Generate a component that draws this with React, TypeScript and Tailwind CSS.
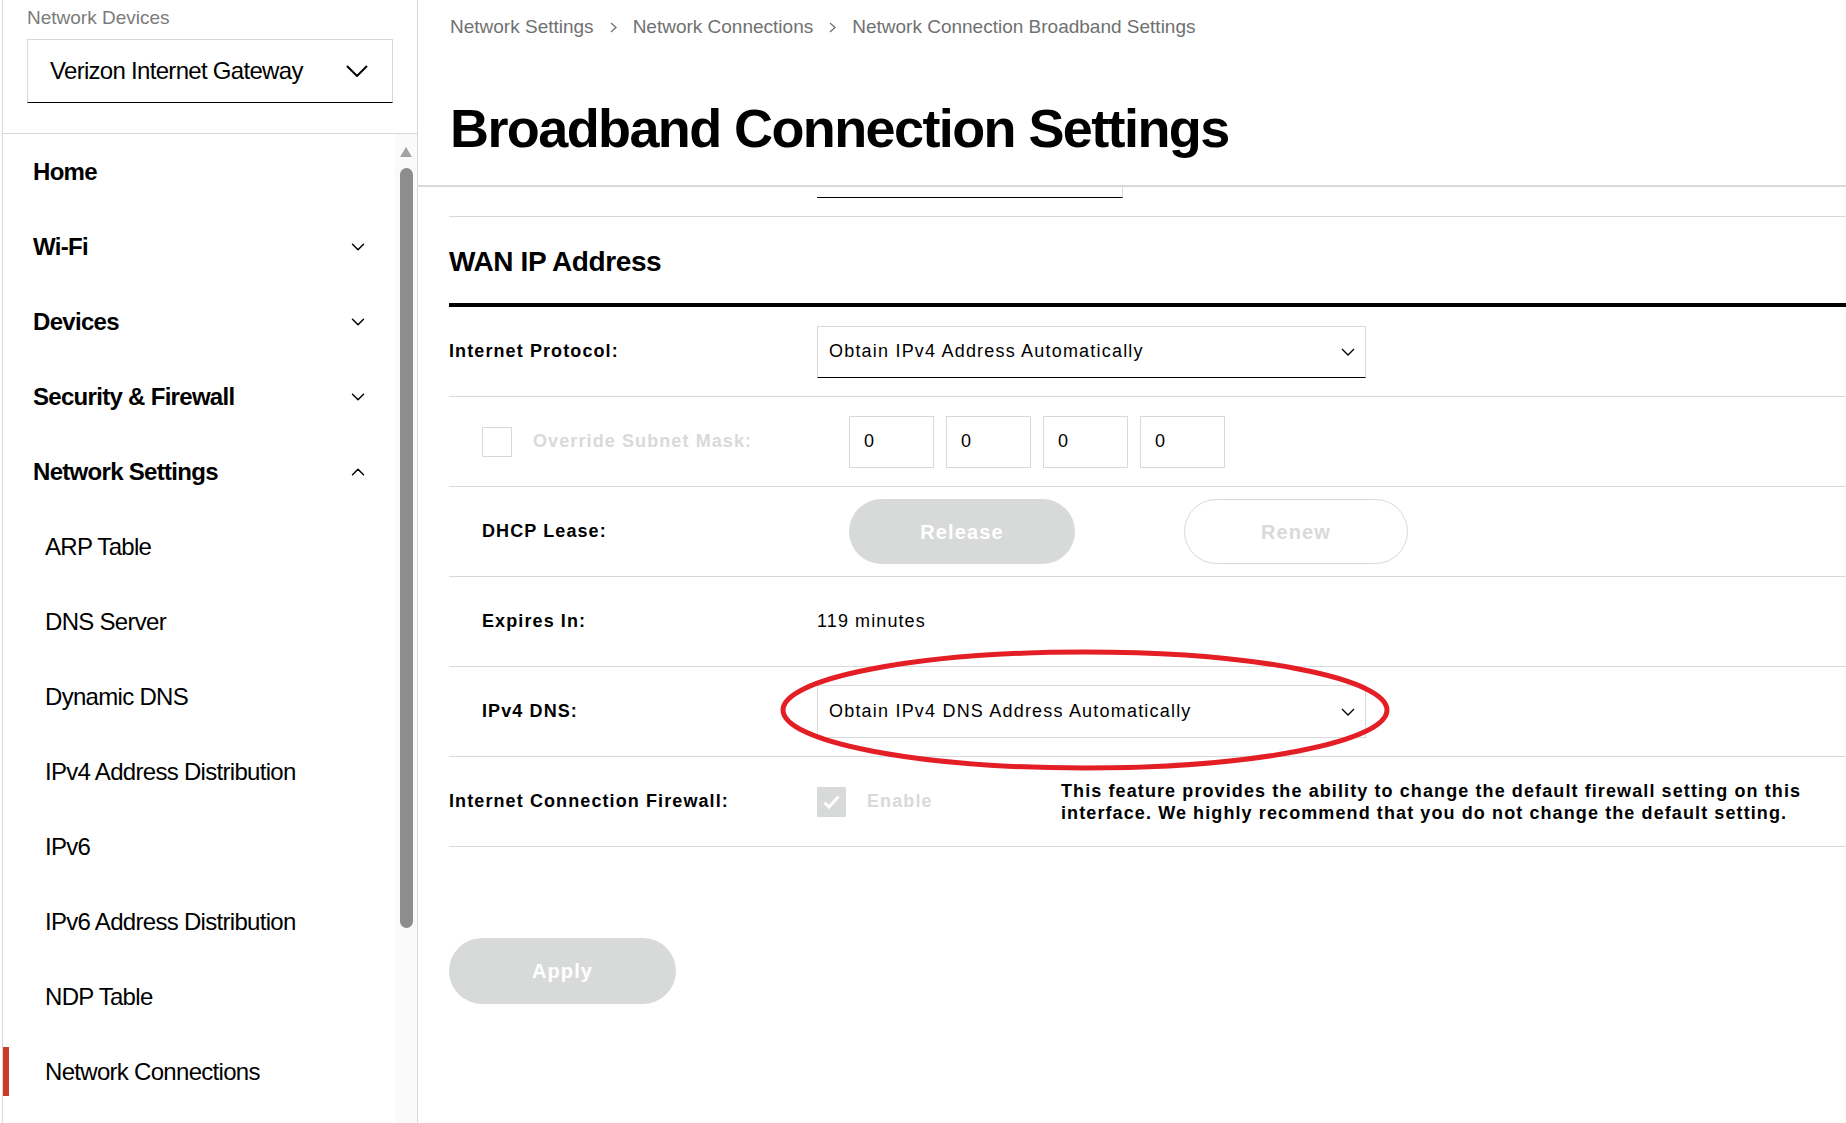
import { ChevronDown, ChevronUp } from 'lucide-react'

type NavItem = { label: string; bold?: boolean; chevron?: 'down' | 'up'; active?: boolean }

const NAV: NavItem[] = [
  { label: 'Home', bold: true },
  { label: 'Wi-Fi', bold: true, chevron: 'down' },
  { label: 'Devices', bold: true, chevron: 'down' },
  { label: 'Security & Firewall', bold: true, chevron: 'down' },
  { label: 'Network Settings', bold: true, chevron: 'up' },
  { label: 'ARP Table' },
  { label: 'DNS Server' },
  { label: 'Dynamic DNS' },
  { label: 'IPv4 Address Distribution' },
  { label: 'IPv6' },
  { label: 'IPv6 Address Distribution' },
  { label: 'NDP Table' },
  { label: 'Network Connections', active: true },
]

const CRUMBS = ['Network Settings', 'Network Connections', 'Network Connection Broadband Settings']

function SelectChevron() {
  return (
    <svg width="14" height="8" viewBox="0 0 14 8" fill="none">
      <path d="M1 1l6 6 6-6" stroke="#000" strokeWidth="1.3" />
    </svg>
  )
}

function Sidebar() {
  return (
    <aside className="ml-[2px] w-[416px] h-full flex-shrink-0 border-l border-r border-[#d8dada] flex flex-col">
      {/* Device picker */}
      <div className="h-[134px] border-b border-[#d8dada] pl-[24px] pt-[6px]">
        <div className="text-[19px] leading-[24px] text-[#7a7c7c]">Network Devices</div>
        <div className="mt-[9px] w-[366px] h-[64px] border border-[#d8dada] border-b-black flex items-center justify-between pl-[22px] pr-[24px]">
          <span className="text-[24px] tracking-[-0.7px] text-black">Verizon Internet Gateway</span>
          <svg width="22" height="12" viewBox="0 0 22 12" fill="none">
            <path d="M1 1l10 10 10-10" stroke="#000" strokeWidth="2" />
          </svg>
        </div>
      </div>

      {/* Nav + scrollbar */}
      <div className="flex-1 flex overflow-hidden">
        <nav className="flex-1">
          {NAV.map((item) => (
            <div
              key={item.label}
              className={`relative h-[75px] flex items-center justify-between pr-[26px] ${item.bold ? 'pl-[30px]' : 'pl-[42px]'}`}
            >
              {item.active && <div className="absolute left-0 top-[13px] w-[6px] h-[49px] bg-[#cd3b29]" />}
              <span className={`text-[24px] tracking-[-0.7px] text-black ${item.bold ? 'font-bold' : ''}`}>{item.label}</span>
              {item.chevron === 'down' && <ChevronDown size={22} strokeWidth={1.6} className="text-black" />}
              {item.chevron === 'up' && <ChevronUp size={22} strokeWidth={1.6} className="text-black" />}
            </div>
          ))}
        </nav>
        <div className="w-[22px] bg-[#fafafa] flex flex-col pl-[5px]">
          <svg width="12" height="10" viewBox="0 0 12 10" className="mt-[13px]">
            <path d="M6 0L12 10H0Z" fill="#a3a3a3" />
          </svg>
          <div className="mt-[11px] w-[13px] h-[760px] rounded-full bg-[#8d8d8d]" />
        </div>
      </div>
    </aside>
  )
}

function Row({ children, className = '' }: { children: React.ReactNode; className?: string }) {
  return <div className={`relative h-[90px] border-b border-[#d8dada] flex items-center ${className}`}>{children}</div>
}

const label = 'text-[18px] font-bold tracking-[1.1px] text-black'

export default function App() {
  return (
    <div className="w-[1846px] h-[1123px] overflow-hidden bg-white flex font-['Liberation_Sans',Arial,sans-serif]">
      <Sidebar />

      <main className="flex-1 flex flex-col min-w-0">
        {/* Header */}
        <header className="h-[187px] border-b-2 border-[#d8dada] pl-[32px] pt-[15px] flex-shrink-0">
          <div className="flex items-center gap-[16px] text-[19px] leading-[24px] text-[#6f7171]">
            {CRUMBS.map((c, i) => (
              <div key={c} className="flex items-center gap-[16px]">
                {i > 0 && (
                  <svg width="7" height="11" viewBox="0 0 7 11" fill="none">
                    <path d="M1 1l5 4.5-5 4.5" stroke="#6f7171" strokeWidth="1.3" />
                  </svg>
                )}
                <span>{c}</span>
              </div>
            ))}
          </div>
          <h1 className="mt-[62px] text-[54px] leading-none font-bold tracking-[-1.6px] text-black">
            Broadband Connection Settings
          </h1>
        </header>

        {/* Scrolled content */}
        <div className="pl-[31px] flex-1 overflow-hidden">
          <div className="h-[30px] border-b border-[#d8dada]">
            <div className="ml-[368px] w-[306px] h-[11px] border-r border-b border-[#d8dada] border-b-black" />
          </div>

          <div className="h-[86px] pt-[29px]">
            <h2 className="text-[28px] leading-[32px] font-bold tracking-[-0.4px] text-black">WAN IP Address</h2>
          </div>
          <div className="h-[4px] bg-black" />

          <Row>
            <div className={`w-[368px] ${label}`}>Internet Protocol:</div>
            <div className="w-[549px] h-[52px] border border-[#d8dada] border-b-black flex items-center justify-between pl-[11px] pr-[10px]">
              <span className="text-[18px] tracking-[1.2px] text-black">Obtain IPv4 Address Automatically</span>
              <SelectChevron />
            </div>
          </Row>

          <Row>
            <div className="w-[400px] pl-[33px] flex items-center">
              <div className="w-[30px] h-[30px] border border-[#d8dada]" />
              <span className="ml-[21px] text-[18px] font-bold tracking-[1.1px] text-[#d8dada]">Override Subnet Mask:</span>
            </div>
            <div className="flex gap-[12px]">
              {[0, 1, 2, 3].map((i) => (
                <div key={i} className="w-[85px] h-[52px] border border-[#d8dada] flex items-center pl-[14px] text-[18px] text-black">
                  0
                </div>
              ))}
            </div>
          </Row>

          <Row>
            <div className={`w-[400px] pl-[33px] ${label}`}>DHCP Lease:</div>
            <button className="w-[226px] h-[65px] rounded-full bg-[#d8dada] text-white text-[20px] font-bold tracking-[1.1px]">
              Release
            </button>
            <button className="ml-[109px] w-[224px] h-[65px] rounded-full border border-[#d8dada] text-[#d8dada] text-[20px] font-bold tracking-[1.1px]">
              Renew
            </button>
          </Row>

          <Row>
            <div className={`w-[368px] pl-[33px] ${label}`}>Expires In:</div>
            <span className="text-[18px] tracking-[1.1px] text-black">119 minutes</span>
          </Row>

          <Row>
            <div className={`w-[368px] pl-[33px] ${label}`}>IPv4 DNS:</div>
            <div className="w-[549px] h-[53px] border border-[#d8dada] flex items-center justify-between pl-[11px] pr-[10px]">
              <span className="text-[18px] tracking-[1.2px] text-black">Obtain IPv4 DNS Address Automatically</span>
              <SelectChevron />
            </div>
            {/* red annotation ring */}
            <svg width="612" height="124" viewBox="0 0 612 124" className="absolute left-[330px] top-[-19px] pointer-events-none">
              <ellipse cx="306" cy="62" rx="302" ry="58" fill="none" stroke="#e31e25" strokeWidth="5" />
            </svg>
          </Row>

          <Row>
            <div className={`w-[368px] ${label}`}>Internet Connection Firewall:</div>
            <div className="w-[244px] flex items-center">
              <div className="w-[29px] h-[30px] bg-[#d8dada] flex items-center justify-center">
                <svg width="17" height="14" viewBox="0 0 17 14" fill="none">
                  <path d="M1.5 7.5l4.5 4.5L15.5 1.5" stroke="#fff" strokeWidth="3" />
                </svg>
              </div>
              <span className="ml-[21px] text-[18px] font-bold tracking-[1.1px] text-[#d8dada]">Enable</span>
            </div>
            <p className="text-[18px] leading-[22px] font-bold tracking-[1.1px] text-black">
              This feature provides the ability to change the default firewall setting on this
              <br />
              interface. We highly recommend that you do not change the default setting.
            </p>
          </Row>

          <button className="mt-[91px] w-[227px] h-[66px] rounded-full bg-[#d8dada] text-white text-[20px] font-bold tracking-[1.1px]">
            Apply
          </button>
        </div>
      </main>
    </div>
  )
}
